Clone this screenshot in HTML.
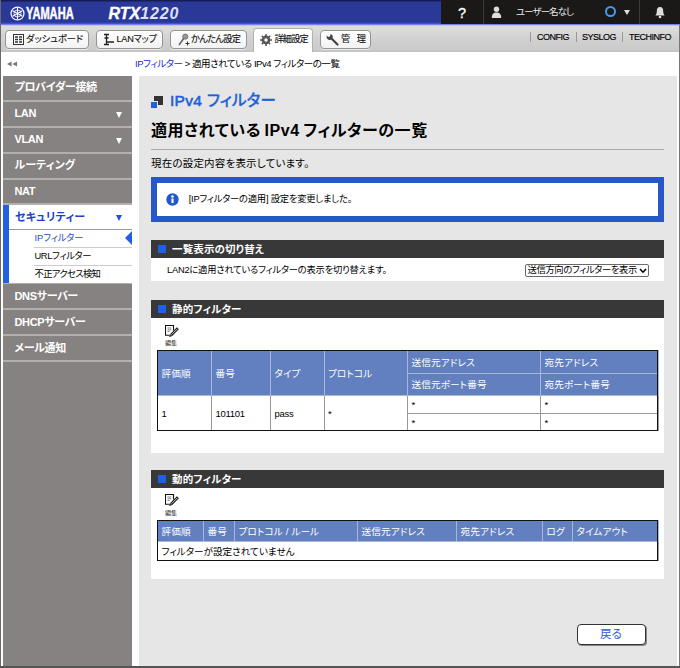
<!DOCTYPE html>
<html lang="ja"><head><meta charset="utf-8">
<style>
*{box-sizing:border-box;margin:0;padding:0}
html,body{width:680px;height:668px;overflow:hidden;background:#fff;font-family:"Liberation Sans","Noto Sans CJK JP",sans-serif;color:#000;font-feature-settings:"palt"}
body{position:relative}
.abs,.t{position:absolute}
.t{white-space:nowrap;line-height:1}
#hdr{left:0;top:0;width:680px;height:26px;background:linear-gradient(#161c58 0,#161c58 1px,#2a3898 2px,#2a3898 22px,#3444c0 23px,#4a5aec 24px,#a0a8ec 25px,#e2e2ec 26px)}
#hdrR{left:441px;top:0;width:239px;height:24px;background:#1a1918}
.vsep{position:absolute;top:0;width:1px;height:24px;background:#3c3c3c}
#tool{left:0;top:26px;width:680px;height:26px;background:linear-gradient(#dedede,#d2d2d2 12px,#cacaca 24px,#c0c0c0)}
.tb{position:absolute;top:30px;height:19px;border:1px solid #959595;border-radius:4px;background:linear-gradient(#ffffff,#f2f2f2);box-shadow:0 1px 0 #e8e8e8}
.tb.act{top:28px;height:25px;background:#fff;border-bottom:none;border-radius:4px 4px 0 0;border-color:#b0b0b0;box-shadow:none}
.tbt{font-size:9.2px;color:#111;top:35px;-webkit-text-stroke:0.12px #111;letter-spacing:-0.55px}
#bc{left:0;top:52px;width:680px;height:24px;background:#fff}
#side{left:3px;top:75.5px;width:129px;height:590.5px;background:#858281}
.mi{position:absolute;left:3px;width:129px;height:24px;background:#858281;color:#fff;font-weight:bold;font-size:11px;line-height:25px;padding-left:11.5px;white-space:nowrap;letter-spacing:-0.35px}
.ml{position:absolute;left:3px;width:129px;height:2px;background:#b2afae}
.tri{position:absolute;width:0;height:0;border-left:3.5px solid transparent;border-right:3.5px solid transparent;border-top:6px solid #fff}
.sub{font-size:9.3px;left:34.5px;letter-spacing:-0.35px}
#main{left:139px;top:75.5px;width:538px;height:590.5px;background:#e6e6e6}
.sec{position:absolute;left:151px;width:512.5px;height:18px;background:#383838;color:#fff;font-weight:bold;font-size:10.5px;line-height:18px;padding-left:21px;white-space:nowrap;letter-spacing:0.15px}
.sec i{position:absolute;left:7px;top:5px;width:8px;height:8px;background:#1e60e8}
.pan{position:absolute;left:151px;width:512.5px;background:#fff}
.s9{font-size:9.3px;letter-spacing:-0.22px}
table{border-collapse:collapse;position:absolute;font-size:9.5px;table-layout:fixed;border:none;letter-spacing:0.15px}
.tbo{position:absolute;border:1px solid #111;z-index:3}
th{background:#6280c0;color:#fff;font-weight:normal;text-align:left;border:1px solid #a8b6d8;padding:0 0 1px 3.5px;font-size:9.6px;white-space:nowrap;overflow:hidden}
td{background:#fff;border:1px solid #999;padding:0 0 0 3.5px;white-space:nowrap;overflow:hidden;font-size:9.5px;letter-spacing:-0.3px;color:#000}
.edl{font-size:6px;color:#111;letter-spacing:-0.1px}
</style></head><body>
<!-- header -->
<div class="abs" id="hdr"></div>
<div class="abs" id="hdrR"></div>
<div class="vsep" style="left:483px"></div>
<div class="vsep" style="left:639px"></div>
<svg class="abs" style="left:9.500px;top:5.500px" width="15" height="15" viewBox="0 0 16 16"><circle cx="8" cy="8" r="6.900" fill="none" stroke="#fff" stroke-width="1.300"/><circle cx="8" cy="8" r="3.800" fill="none" stroke="#fff" stroke-width="0.900"/><path d="M8 2v12M2.800 11L13.200 5M2.800 5L13.200 11" stroke="#fff" stroke-width="1.100"/></svg>
<div class="t" style="left:26px;top:5px;font-size:16.500px;font-weight:bold;color:#fff;-webkit-text-stroke:0.500px #fff;transform:scaleX(.672);transform-origin:0 0">YAMAHA</div>
<div class="t" style="left:108.500px;top:5.500px;font-size:16px;font-weight:bold;font-style:italic;color:#fff;-webkit-text-stroke:0.400px #fff">RTX<span style="color:#dde0f4;-webkit-text-stroke:0;letter-spacing:0.900px">1220</span></div>
<div class="t" style="left:458px;top:5.500px;font-size:14.500px;color:#fff;-webkit-text-stroke:0.300px #fff">?</div>
<svg class="abs" style="left:491px;top:6px" width="11" height="12" viewBox="0 0 11 12"><circle cx="5.500" cy="3.200" r="2.700" fill="#ddd"/><path d="M0.800 12C0.800 8 2.500 6.600 5.500 6.600S10.200 8 10.200 12z" fill="#ddd"/></svg>
<div class="t" style="left:516px;top:7px;font-size:9.500px;color:#e8e8e8;letter-spacing:-0.950px">ユーザー名なし</div>
<div class="abs" style="left:605px;top:6px;width:11px;height:11px;border:2px solid #4a98ec;border-radius:50%"></div>
<div class="tri" style="left:623.500px;top:10px;border-top-color:#ddd;border-left-width:3.300px;border-right-width:3.300px;border-top-width:5px"></div>
<svg class="abs" style="left:654px;top:5.500px" width="12" height="13" viewBox="0 0 12 13"><path d="M6 1C3.600 1 2.800 3 2.800 5.200C2.800 7.600 2 8.600 1.200 9.600H10.800C10 8.600 9.200 7.600 9.200 5.200C9.200 3 8.400 1 6 1z" fill="#ddd"/><circle cx="6" cy="11" r="1.300" fill="#ddd"/></svg>
<!-- toolbar -->
<div class="abs" id="tool"></div>
<div class="tb" style="left:5px;width:84px"></div>
<div class="tb" style="left:96px;width:67px"></div>
<div class="tb" style="left:170px;width:77px"></div>
<div class="tb act" style="left:253px;width:60px"></div>
<div class="tb" style="left:320px;width:51px"></div>
<svg class="abs" style="left:13px;top:34px" width="11" height="11" viewBox="0 0 11 11"><rect x=".5" y=".5" width="10" height="10" fill="#fff" stroke="#333"/><path d="M2 3h3M2 5.500h3M2 8h3M6 3h3M6 5.500h3M6 8h3" stroke="#333" stroke-width="1.400"/></svg>
<div class="t tbt" style="left:26px;letter-spacing:0">ダッシュボード</div>
<svg class="abs" style="left:103px;top:33px" width="12" height="13" viewBox="0 0 12 13"><path d="M1 1.500h5M3.500 1.500v10M1 11.500h5M3.500 9h7.500M1.500 5h4" stroke="#222" stroke-width="1.300" fill="none"/></svg>
<div class="t tbt" style="left:116.500px;letter-spacing:-0.250px">LANマップ</div>
<svg class="abs" style="left:177px;top:33px" width="13" height="13" viewBox="0 0 13 13"><path d="M2 12L7 5" stroke="#666" stroke-width="1.600"/><circle cx="8.300" cy="3.600" r="2.600" fill="#999" stroke="#666" stroke-width=".8"/><path d="M8.500 10.500h4M10.500 8.500v4" stroke="#333" stroke-width="1"/></svg>
<div class="t tbt" style="left:191px;letter-spacing:-0.650px">かんたん設定</div>
<svg class="abs" style="left:260px;top:34px" width="12" height="12" viewBox="0 0 12 12"><circle cx="6" cy="6" r="3.400" fill="none" stroke="#555" stroke-width="2"/><path d="M6 0v12M0 6h12M1.800 1.800l8.400 8.400M10.200 1.800l-8.400 8.400" stroke="#555" stroke-width="1.500"/><circle cx="6" cy="6" r="1.700" fill="#fff"/></svg>
<div class="t tbt" style="left:274.500px;color:#111;letter-spacing:-0.850px">詳細設定</div>
<svg class="abs" style="left:326px;top:33px" width="13" height="13" viewBox="0 0 13 13"><path d="M11.500 11.500L5 5" stroke="#444" stroke-width="2.200" stroke-linecap="round"/><path d="M1 2.500a3 3 0 1 0 3.500-1.500l-.5 2.500-2 .5z" fill="#444"/></svg>
<div class="t tbt" style="left:341px;letter-spacing:0.500px">管&nbsp;&nbsp;理</div>
<div class="abs" style="left:530px;top:32px;width:1px;height:10px;background:#999"></div>
<div class="abs" style="left:576px;top:32px;width:1px;height:10px;background:#999"></div>
<div class="abs" style="left:622px;top:32px;width:1px;height:10px;background:#999"></div>
<div class="t" style="left:537px;top:32.500px;font-size:9px;color:#000;-webkit-text-stroke:0.150px #000;letter-spacing:-0.500px">CONFIG</div>
<div class="t" style="left:582px;top:32.500px;font-size:9px;color:#000;-webkit-text-stroke:0.150px #000;letter-spacing:-0.500px">SYSLOG</div>
<div class="t" style="left:629px;top:32.500px;font-size:9px;color:#000;-webkit-text-stroke:0.150px #000;letter-spacing:-0.500px">TECHINFO</div>
<!-- breadcrumb -->
<div class="abs" id="bc"></div>
<svg class="abs" style="left:7px;top:61px" width="11" height="6" viewBox="0 0 11 6"><path d="M0 3L4.600 .4V5.600zM5.400 3L10 .4V5.600z" fill="#777"/></svg>
<div class="t" style="left:135px;top:59px;font-size:9.500px;letter-spacing:-0.450px"><span style="color:#2030c0">IPフィルター</span> &gt; 適用されている IPv4 フィルターの一覧</div>
<!-- frame -->
<div class="abs" style="left:0;top:0;width:1px;height:668px;background:#6a6a6a"></div>
<div class="abs" style="left:679px;top:25px;width:1px;height:643px;background:#777"></div>
<div class="abs" style="left:0;top:666px;width:680px;height:2px;background:#555"></div>

<!-- sidebar -->
<div class="abs" id="side"></div>
<div class="mi" style="line-height:23px;top:76px">プロバイダー接続</div><div class="ml" style="top:100px"></div>
<div class="mi" style="line-height:23px;top:102px">LAN</div><div class="ml" style="top:126px"></div>
<div class="mi" style="line-height:23px;top:128px">VLAN</div><div class="ml" style="top:152px"></div>
<div class="mi" style="line-height:23px;top:154px;letter-spacing:0.100px">ルーティング</div><div class="ml" style="top:178px"></div>
<div class="mi" style="line-height:23px;top:180px">NAT</div><div class="ml" style="top:203px"></div>
<div class="abs" style="left:3px;top:205px;width:129px;height:78px;background:#fff"></div>
<div class="abs" style="left:3px;top:205px;width:6px;height:78px;background:#2060e4"></div>
<div class="mi" style="top:205px;left:9px;width:123px;padding-left:6px;background:#fff;color:#1a44c8;letter-spacing:0.250px">セキュリティー</div>
<div class="abs" style="left:9px;top:229px;width:123px;height:1px;background:#999"></div>
<div class="abs" style="left:34px;top:247px;width:98px;height:1px;background:#ccc"></div>
<div class="abs" style="left:34px;top:265px;width:98px;height:1px;background:#ccc"></div>
<div class="t sub" style="top:233.500px;color:#2848c8;letter-spacing:-0.100px">IPフィルター</div>
<div class="t sub" style="top:251.500px">URLフィルター</div>
<div class="t sub" style="top:269.500px;letter-spacing:-0.650px">不正アクセス検知</div>
<div class="abs" style="left:125px;top:231px;width:0;height:0;border-top:7px solid transparent;border-bottom:7px solid transparent;border-right:7px solid #2060e4"></div>
<div class="ml" style="top:283px;height:1px"></div>
<div class="mi" style="top:284px">DNSサーバー</div><div class="ml" style="top:308px"></div>
<div class="mi" style="top:310px">DHCPサーバー</div><div class="ml" style="top:334px"></div>
<div class="mi" style="top:336px">メール通知</div><div class="ml" style="top:360px"></div>
<div class="tri" style="left:116px;top:112px"></div>
<div class="tri" style="left:116px;top:138px"></div>
<div class="tri" style="left:116px;top:215px;border-top-color:#1e50d8"></div>
<!-- main -->
<div class="abs" id="main"></div>
<div class="abs" style="left:154px;top:96px;width:9px;height:9px;background:#333"></div>
<div class="abs" style="left:151px;top:101px;width:7px;height:7px;background:#1e60e0;border-top:1px solid #e6e6e6;border-right:1px solid #e6e6e6"></div>
<div class="t" style="left:170px;top:92.500px;font-size:15.500px;color:#2060d8;-webkit-text-stroke:0.550px #2060d8;letter-spacing:0.300px">IPv4 フィルター</div>
<div class="t" style="left:151px;top:122.800px;font-size:16px;font-weight:bold;letter-spacing:0.560px;word-spacing:-1.500px">適用されている IPv4 フィルターの一覧</div>
<div class="abs" style="left:151px;top:149px;width:513px;height:1px;background:#aaa"></div>
<div class="t" style="left:151px;top:157.500px;font-size:10.500px;letter-spacing:0.200px">現在の設定内容を表示しています。</div>
<div class="abs" style="left:151px;top:177px;width:513px;height:45px;background:#fff;border:6px solid #2858c8"></div>
<svg class="abs" style="left:166px;top:192.500px" width="13" height="13" viewBox="0 0 13 13"><circle cx="6.500" cy="6.500" r="6.200" fill="#2258c8"/><rect x="5.400" y="5.500" width="2.200" height="4.600" fill="#fff"/><circle cx="6.500" cy="3.500" r="1.300" fill="#fff"/></svg>
<div class="t s9" style="left:188.700px;top:194.500px">[IPフィルターの適用] 設定を変更しました。</div>

<div class="sec" style="top:240px"><i></i>一覧表示の切り替え</div>
<div class="pan" style="top:258px;height:23px"></div>
<div class="t s9" style="left:167px;top:265.500px">LAN2に適用されているフィルターの表示を切り替えます。</div>
<div class="abs" style="left:525px;top:264px;width:124px;height:12.500px;border:1px solid #6a6a6a;border-radius:2px;background:#fff"></div>
<div class="t s9" style="left:527.500px;top:265.500px;letter-spacing:-0.350px">送信方向のフィルターを表示</div>
<svg class="abs" style="left:638.500px;top:267.500px" width="8" height="6" viewBox="0 0 8 6"><path d="M1 1l3 3.200 3-3.200" fill="none" stroke="#000" stroke-width="1.600"/></svg>

<div class="sec" style="top:300px"><i></i>静的フィルター</div>
<div class="pan" style="top:318px;height:135px"></div>
<svg class="abs" style="left:164.500px;top:324.500px" width="15" height="12" viewBox="0 0 15 12"><path d="M8.500 5.500V.5H.5v9.800H4.600" fill="none" stroke="#111" stroke-width="1.100"/><path d="M2.500 3h3.800M2.500 4.800h3.800M2.500 6.500h2" stroke="#777" stroke-width="0.900"/><path d="M6 10.200L12.900 3.300" stroke="#111" stroke-width="2.700"/><path d="M6.600 9.600L12.500 3.700" stroke="#fff" stroke-width="0.800"/><path d="M4.100 12l2.600-.7-1.900-1.900z" fill="#111"/></svg>
<div class="t edl" style="left:165px;top:340.300px">編集</div>
<div class="sec" style="top:470px"><i></i>動的フィルター</div>
<div class="pan" style="top:488px;height:91px"></div>
<svg class="abs" style="left:164.500px;top:494px" width="15" height="12" viewBox="0 0 15 12"><path d="M8.500 5.500V.5H.5v9.800H4.600" fill="none" stroke="#111" stroke-width="1.100"/><path d="M2.500 3h3.800M2.500 4.800h3.800M2.500 6.500h2" stroke="#777" stroke-width="0.900"/><path d="M6 10.200L12.900 3.300" stroke="#111" stroke-width="2.700"/><path d="M6.600 9.600L12.500 3.700" stroke="#fff" stroke-width="0.800"/><path d="M4.100 12l2.600-.7-1.900-1.900z" fill="#111"/></svg>
<div class="t edl" style="left:165px;top:509.800px">編集</div>

<div class="tbo" style="left:157px;top:350px;width:501px;height:81px"></div>
<table style="left:157px;top:350px;width:501px">
<colgroup><col style="width:54px"><col style="width:59px"><col style="width:53.500px"><col style="width:83.500px"><col style="width:133px"><col style="width:118px"></colgroup>
<tr style="height:23px"><th rowspan="2">評価順</th><th rowspan="2">番号</th><th rowspan="2">タイプ</th><th rowspan="2">プロトコル</th><th>送信元アドレス</th><th>宛先アドレス</th></tr>
<tr style="height:22px"><th>送信元ポート番号</th><th>宛先ポート番号</th></tr>
<tr style="height:18px"><td rowspan="2">1</td><td rowspan="2">101101</td><td rowspan="2">pass</td><td rowspan="2">*</td><td>*</td><td>*</td></tr>
<tr style="height:17px"><td>*</td><td>*</td></tr>
</table>

<div class="tbo" style="left:157px;top:520px;width:501px;height:41px"></div>
<table style="left:157px;top:520px;width:501px">
<colgroup><col style="width:46px"><col style="width:31px"><col style="width:123px"><col style="width:99px"><col style="width:86px"><col style="width:30px"><col style="width:86px"></colgroup>
<tr style="height:21px"><th>評価順</th><th>番号</th><th>プロトコル / ルール</th><th>送信元アドレス</th><th>宛先アドレス</th><th>ログ</th><th>タイムアウト</th></tr>
<tr style="height:19px"><td colspan="7" style="font-size:9.600px;letter-spacing:0">フィルターが設定されていません</td></tr>
</table>

<div class="abs" style="left:577px;top:624px;width:69px;height:21px;border:1px solid #333;border-radius:4px;background:#fff;box-shadow:1px 1px 0 #888"></div>
<div class="t" style="left:600px;top:629px;font-size:11.500px;color:#3060d0">戻る</div>
</body></html>
